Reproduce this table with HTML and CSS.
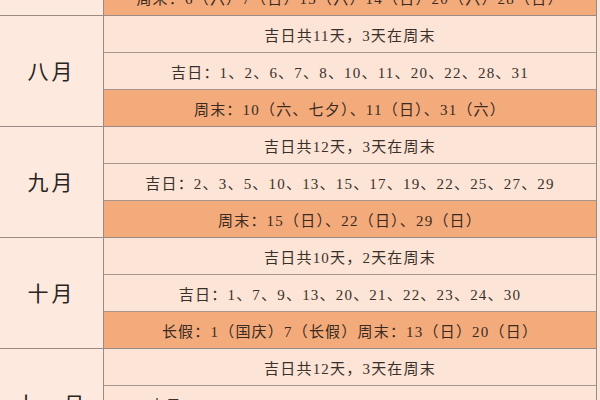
FILE: index.html
```html
<!DOCTYPE html>
<html lang="zh">
<head>
<meta charset="utf-8">
<link rel="stylesheet" href="styles.css">
</head>
<body>
<div class="table">
  <div class="block block-top">
    <div class="month"></div>
    <div class="rows">
      <div class="row hot">周末：6（六）7（日）13（六）14（日）20（六）28（日）</div>
    </div>
  </div>
  <div class="block">
    <div class="month">八月</div>
    <div class="rows">
      <div class="row">吉日共11天，3天在周末</div>
      <div class="row">吉日：1、2、6、7、8、10、11、20、22、28、31</div>
      <div class="row hot">周末：10（六、七夕）、11（日）、31（六）</div>
    </div>
  </div>
  <div class="block">
    <div class="month">九月</div>
    <div class="rows">
      <div class="row">吉日共12天，3天在周末</div>
      <div class="row">吉日：2、3、5、10、13、15、17、19、22、25、27、29</div>
      <div class="row hot">周末：15（日）、22（日）、29（日）</div>
    </div>
  </div>
  <div class="block">
    <div class="month">十月</div>
    <div class="rows">
      <div class="row">吉日共10天，2天在周末</div>
      <div class="row">吉日：1、7、9、13、20、21、22、23、24、30</div>
      <div class="row hot">长假：1（国庆）7（长假）周末：13（日）20（日）</div>
    </div>
  </div>
  <div class="block">
    <div class="month">十一月</div>
    <div class="rows">
      <div class="row">吉日共12天，3天在周末</div>
      <div class="row">吉日：1、3、4、8、10、13、16、17、22、25、26、29</div>
      <div class="row hot">周末：3（日）、16（六）、17（日）</div>
    </div>
  </div>
</div>
</body>
</html>
```

FILE: styles.css
```css
html, body {
  margin: 0;
  padding: 0;
}
body {
  width: 600px;
  height: 400px;
  overflow: hidden;
  background: #f8e6dc;
  font-family: "Liberation Serif", "Noto Sans CJK SC", serif;
  color: #2e2520;
}
.table {
  width: 596px;
  margin-top: -21px;
  border-right: 1px solid #9c8b84;
}
.block {
  display: flex;
  border-bottom: 1px solid #9c8b84;
}
.month {
  width: 104px;
  flex: none;
  border-right: 1px solid #9c8b84;
  background: #fde9de;
  display: flex;
  align-items: center;
  justify-content: center;
  padding-bottom: 3px;
  box-sizing: border-box;
  font-size: 21px;
  letter-spacing: 3px;
  font-weight: 400;
  color: #2a2420;
}
.rows {
  flex: 1;
  display: flex;
  flex-direction: column;
}
.row {
  height: 36px;
  border-bottom: 1px solid #a8968e;
  background: #fce4d7;
  display: flex;
  align-items: center;
  justify-content: center;
  font-size: 15px;
  letter-spacing: 1.2px;
  color: #3a302a;
}
.row:last-child {
  border-bottom: none;
}
.row.hot {
  background: #f3ab7c;
  color: #3a2a20;
}
```
